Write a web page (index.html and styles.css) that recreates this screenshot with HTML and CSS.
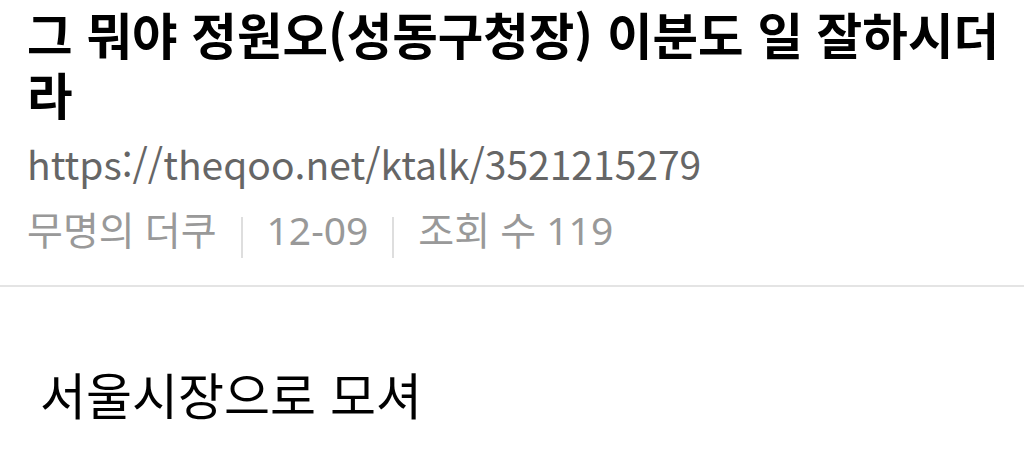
FILE: index.html
```html
<!DOCTYPE html>
<html lang="ko">
<head>
<meta charset="utf-8">
<link rel="stylesheet" href="styles.css">
</head>
<body>
<div class="page">
  <header class="head">
    <h1 class="title">그 뭐야 정원오(성동구청장) 이분도 일 잘하시더라</h1>
    <div class="url">https://theqoo.net/ktalk/3521215279</div>
    <div class="meta">
      <span>무명의 더쿠</span>
      <span class="sep"></span>
      <span>12-09</span>
      <span class="sep"></span>
      <span>조회 수 119</span>
    </div>
  </header>
  <div class="content">
    <p class="body-text">서울시장으로 모셔</p>
  </div>
</div>
</body>
</html>
```
FILE: styles.css
```css
html, body {
  margin: 0;
  padding: 0;
  background: #ffffff;
}
body {
  font-family: "Noto Sans CJK KR", "Noto Sans", sans-serif;
  width: 1024px;
  height: 472px;
  overflow: hidden;
}
.head {
  padding: 4px 10px 0 27px;
  border-bottom: 2px solid #e4e4e4;
  height: 287px;
  box-sizing: border-box;
}
.title {
  margin: 0;
  font-size: 49.5px;
  font-weight: 700;
  line-height: 60px;
  color: #000;
}
.url {
  margin-top: 17px;
  font-size: 39px;
  line-height: 44px;
  color: #666;
}
.meta {
  margin-top: 23px;
  display: flex;
  align-items: flex-start;
  font-family: "Noto Sans", "Noto Sans CJK KR", sans-serif;
  font-size: 39px;
  line-height: 44px;
  color: #999;
  gap: 24px;
}
.sep {
  width: 2px;
  height: 41px;
  margin-top: 9px;
  background: #dedede;
}
.content {
  padding: 76px 40px 0;
}
.body-text {
  margin: 0;
  font-size: 50px;
  line-height: 60px;
  color: #000;
}
```
